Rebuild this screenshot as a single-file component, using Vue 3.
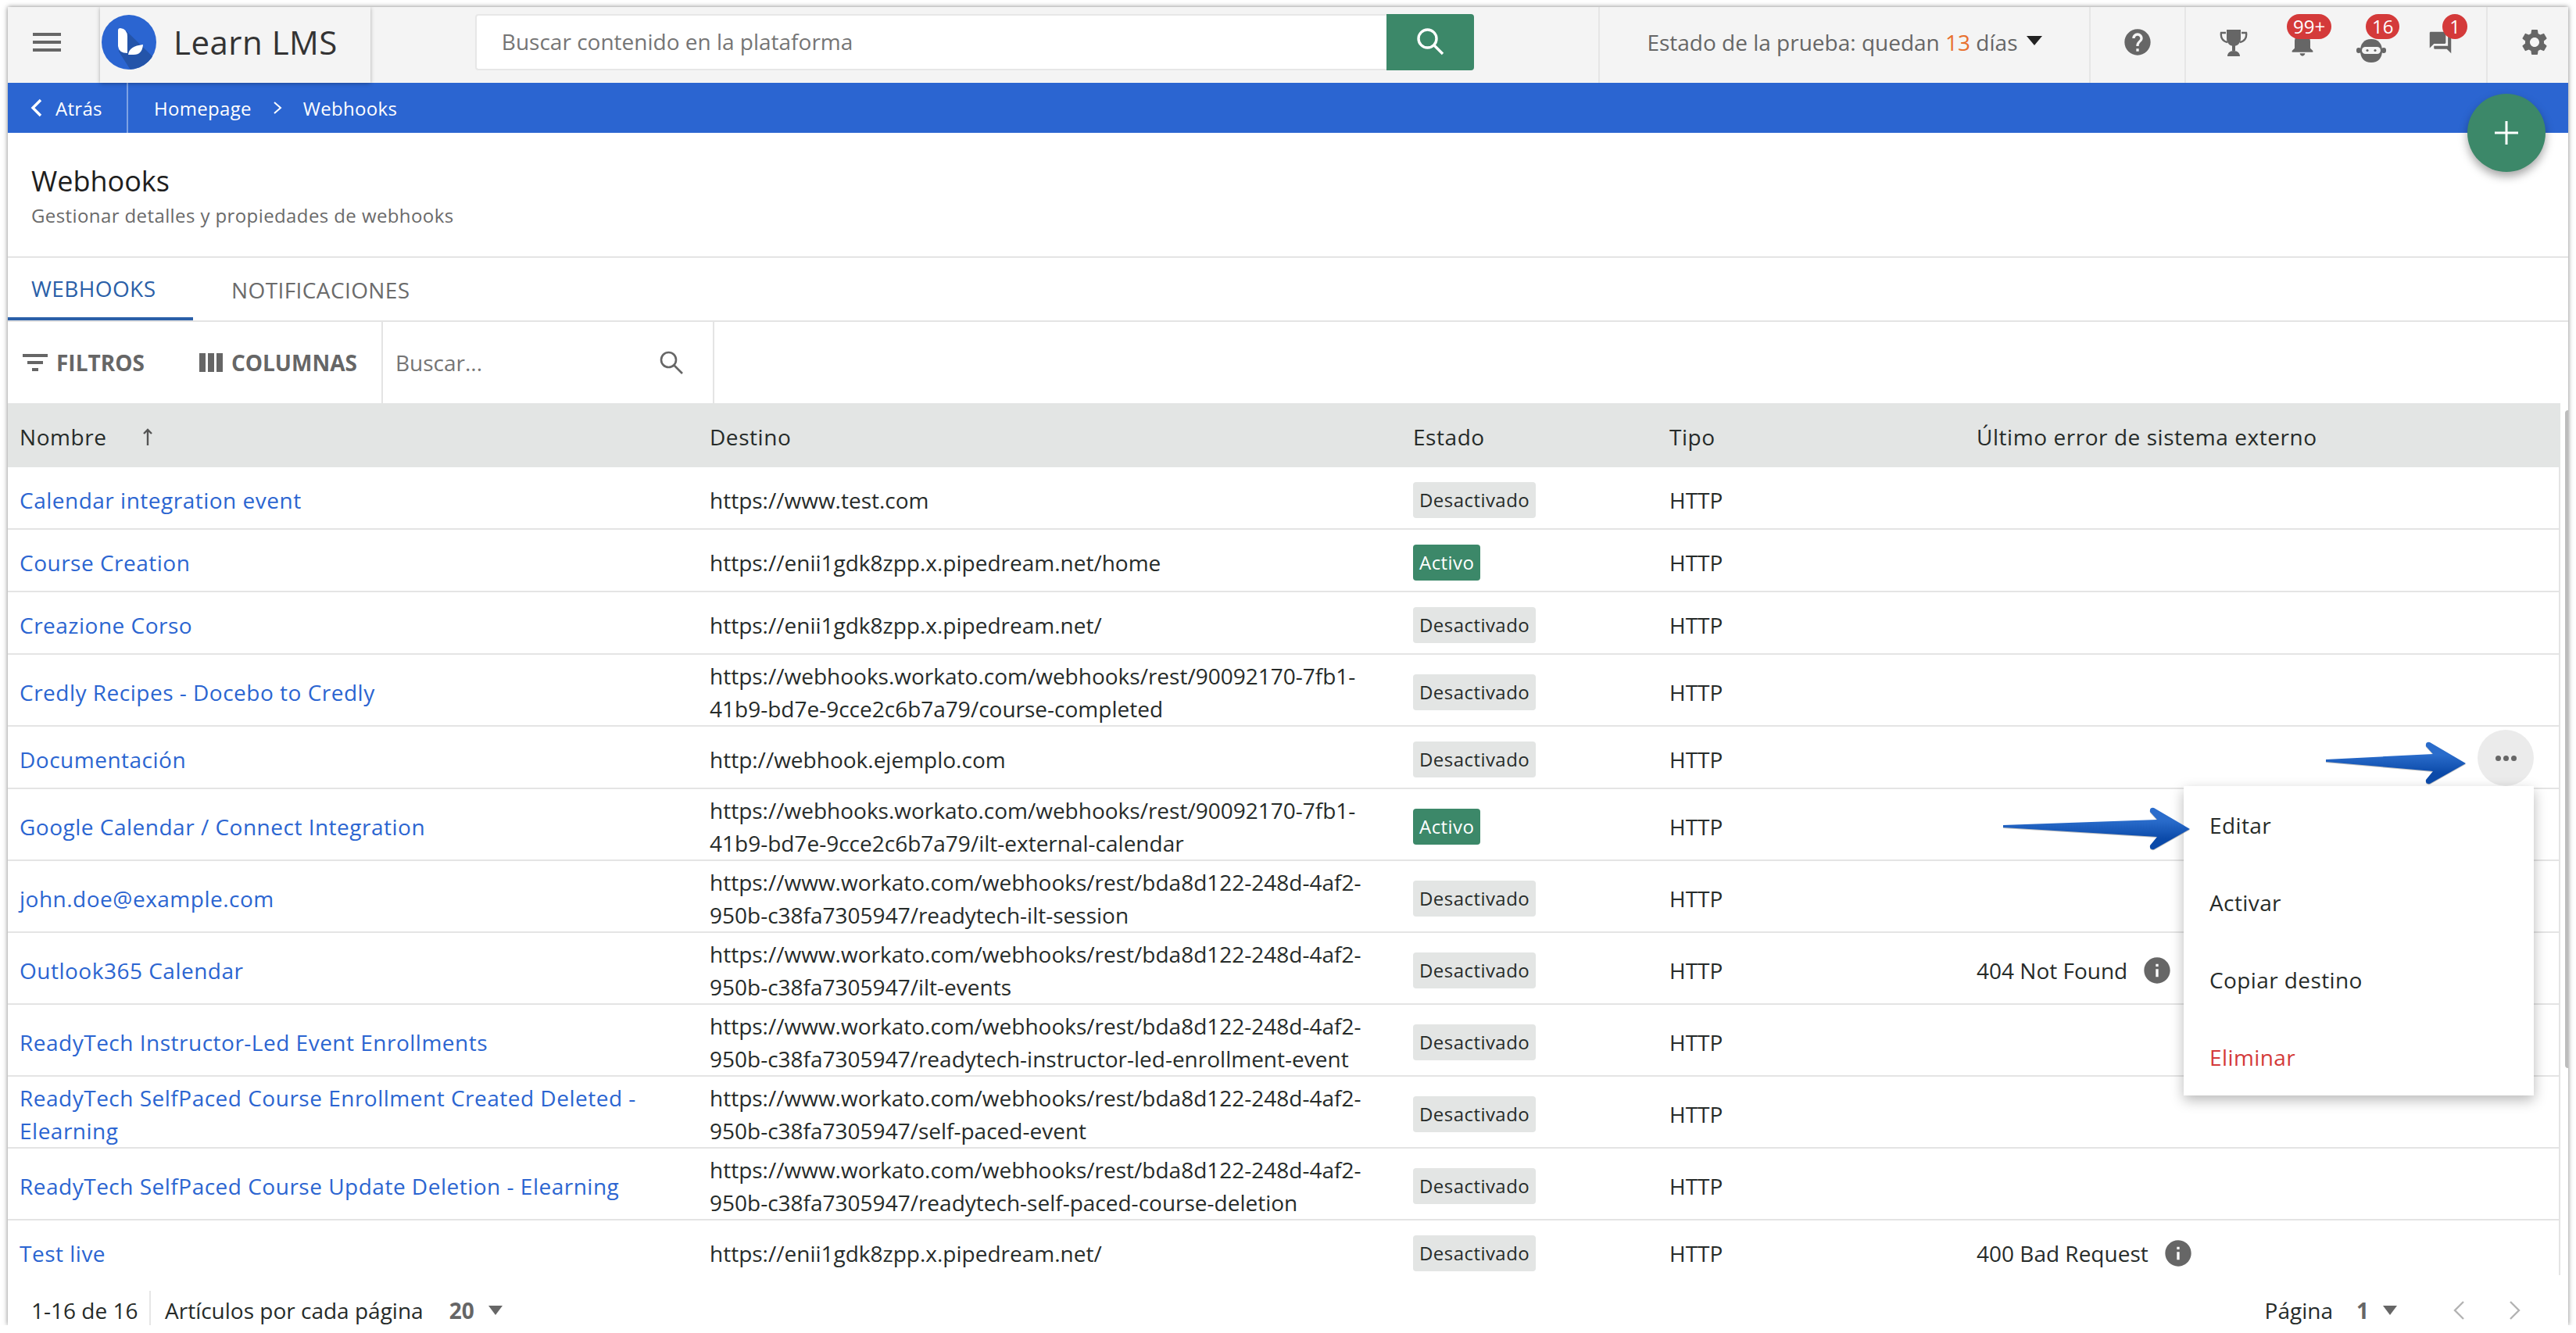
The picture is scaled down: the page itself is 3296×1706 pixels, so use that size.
<script setup>
// Webhooks list page of the LMS admin, with the row menu opened.
const WORKATO = "https://www.workato.com/webhooks/rest/bda8d122-248d-4af2-950b-c38fa7305947/"
const WEBHOOKS_URL = "https://webhooks.workato.com/webhooks/rest/90092170-7fb1-41b9-bd7e-9cce2c6b7a79/"

const rows = [
  { name: "Calendar integration event", url: "https://www.test.com", active: false },
  { name: "Course Creation", url: "https://enii1gdk8zpp.x.pipedream.net/home", active: true },
  { name: "Creazione Corso", url: "https://enii1gdk8zpp.x.pipedream.net/", active: false },
  { name: "Credly Recipes - Docebo to Credly", url: WEBHOOKS_URL + "course-completed", active: false },
  { name: "Documentación", url: "http://webhook.ejemplo.com", active: false },
  { name: "Google Calendar / Connect Integration", url: WEBHOOKS_URL + "ilt-external-calendar", active: true },
  { name: "john.doe@example.com", url: WORKATO + "readytech-ilt-session", active: false },
  { name: "Outlook365 Calendar", url: WORKATO + "ilt-events", active: false, error: "404 Not Found" },
  { name: "ReadyTech Instructor-Led Event Enrollments", url: WORKATO + "readytech-instructor-led-enrollment-event", active: false },
  { name: "ReadyTech SelfPaced Course Enrollment Created Deleted - Elearning", url: WORKATO + "self-paced-event", active: false },
  { name: "ReadyTech SelfPaced Course Update Deletion - Elearning", url: WORKATO + "readytech-self-paced-course-deletion", active: false },
  { name: "Test live", url: "https://enii1gdk8zpp.x.pipedream.net/", active: false, error: "400 Bad Request" },
]

const menu = ["Editar", "Activar", "Copiar destino"]

// Annotation arrows drawn over the table, head fixed at the right end.
const arrows = [
  { cls: "arrow-kebab", w: 180 },
  { cls: "arrow-edit", w: 240 },
]
function arrowPath(w) {
  const n = w - 42
  return `M1 24 L${n} 17 L${n - 9} 7 Q${n - 10} 1 ${n - 4} 2 L${w} 29 L${n - 4} 55 Q${n - 10} 56 ${n - 9} 50 L${n} 39 L1 27 Z`
}
</script>

<template>
  <div class="frame">
    <header class="topbar">
      <button class="burger">
        <svg width="36" height="24" viewBox="0 0 36 24" fill="#666"><path d="M0 0h36v4H0zM0 10h36v4H0zM0 20h36v4H0z" /></svg>
      </button>
      <div class="brand">
        <svg class="logo" width="70" height="70" viewBox="0 0 70 70">
          <defs><clipPath id="logo-clip"><circle cx="35" cy="35" r="35" /></clipPath></defs>
          <circle cx="35" cy="35" r="35" fill="#2b65d1" />
          <path clip-path="url(#logo-clip)" d="M31 20 L68 56 L48 72 L38 72 L22 47 Z" fill="#2454a9" />
          <path d="M21 20 Q21 17 24 17 Q33 18 33 28 V49 Q22 49 21 40 Z" fill="#fff" />
          <path d="M34 51 Q35 40 53 38 Q52 51 41 51 Z" fill="#fff" />
        </svg>
        <span class="brand-name">Learn LMS</span>
      </div>
      <div class="global-search">
        <div class="global-input">Buscar contenido en la plataforma</div>
        <button class="global-btn">
          <svg width="36" height="36" viewBox="0 0 36 36" fill="none" stroke="#fff" stroke-width="3.4"><circle cx="14.5" cy="14.5" r="11.5" /><path d="M23 23 L34 34" /></svg>
        </button>
      </div>
      <div class="trial">
        <span>Estado de la prueba: quedan <b class="days">13</b> días</span>
        <i class="trial-caret"></i>
      </div>
      <div class="tool help">
        <svg width="40" height="40" viewBox="0 0 24 24" fill="#666"><path d="M12 2C6.48 2 2 6.48 2 12s4.48 10 10 10 10-4.48 10-10S17.52 2 12 2zm1 17h-2v-2h2v2zm2.07-7.75l-.9.92C13.45 12.9 13 13.5 13 15h-2v-.5c0-1.1.45-2.1 1.17-2.83l1.24-1.26c.37-.36.59-.86.59-1.41 0-1.1-.9-2-2-2s-2 .9-2 2H8c0-2.21 1.79-4 4-4s4 1.79 4 4c0 .88-.36 1.68-.93 2.25z" /></svg>
      </div>
      <div class="tool-group">
        <div class="slot">
          <svg width="36" height="34" viewBox="0 0 36 34" fill="#666">
            <path d="M9 0h18v11c0 6-4 10-9 10s-9-4-9-10z" />
            <path d="M8 4H2c-1 6 2 11 8 12M28 4h6c1 6-2 11-8 12" fill="none" stroke="#666" stroke-width="2.4" />
            <path d="M16 20h4v7h-4zM10 34c0-4 3-7 8-7s8 3 8 7z" />
          </svg>
        </div>
        <div class="slot">
          <svg width="40" height="40" viewBox="0 0 24 24" fill="#666"><path d="M12 22c1.1 0 2-.9 2-2h-4c0 1.1.89 2 2 2zm6-6v-5c0-3.07-1.64-5.64-4.5-6.32V4c0-.83-.67-1.5-1.5-1.5s-1.5.67-1.5 1.5v.68C7.63 5.36 6 7.92 6 11v5l-2 2v1h16v-1l-2-2z" /></svg>
          <span class="count count-bell">99+</span>
        </div>
        <div class="slot">
          <svg class="bot" width="38" height="30" viewBox="0 0 38 30" fill="#666">
            <path d="M19 0c9 0 14 6 14 15s-5 15-14 15S5 24 5 15 10 0 19 0z" />
            <rect x="0" y="11" width="6" height="7" rx="3" /><rect x="32" y="11" width="6" height="7" rx="3" />
            <rect x="7" y="10" width="24" height="9" rx="4.5" fill="#f4f4f4" />
            <circle cx="14" cy="14.5" r="1.6" /><circle cx="24" cy="14.5" r="1.6" />
          </svg>
          <span class="count count-bot">16</span>
        </div>
        <div class="slot">
          <svg width="33" height="33" viewBox="0 0 24 24" fill="#666"><path d="M21 6h-2v9H6v2c0 .55.45 1 1 1h11l4 4V7c0-.55-.45-1-1-1zm-4 6V3c0-.55-.45-1-1-1H3c-.55 0-1 .45-1 1v14l4-4h10c.55 0 1-.45 1-1z" /></svg>
          <span class="count count-chat">1</span>
        </div>
      </div>
      <div class="tool gear">
        <svg width="40" height="40" viewBox="0 0 24 24" fill="#666"><path d="M19.14 12.94c.04-.3.06-.61.06-.94 0-.32-.02-.64-.07-.94l2.03-1.58a.49.49 0 0 0 .12-.61l-1.92-3.32a.488.488 0 0 0-.59-.22l-2.39.96c-.5-.38-1.03-.7-1.62-.94l-.36-2.54a.484.484 0 0 0-.48-.41h-3.84c-.24 0-.43.17-.47.41l-.36 2.54c-.59.24-1.13.57-1.62.94l-2.39-.96c-.22-.08-.47 0-.59.22L2.74 8.87c-.12.21-.08.47.12.61l2.03 1.58c-.05.3-.09.63-.09.94s.02.64.07.94l-2.03 1.58a.49.49 0 0 0-.12.61l1.92 3.32c.12.22.37.29.59.22l2.39-.96c.5.38 1.03.7 1.62.94l.36 2.54c.05.24.24.41.48.41h3.84c.24 0 .44-.17.47-.41l.36-2.54c.59-.24 1.13-.56 1.62-.94l2.39.96c.22.08.47 0 .59-.22l1.92-3.32c.12-.22.07-.47-.12-.61l-2.01-1.58zM12 15.6c-1.98 0-3.6-1.62-3.6-3.6s1.62-3.6 3.6-3.6 3.6 1.62 3.6 3.6-1.62 3.6-3.6 3.6z" /></svg>
      </div>
    </header>

    <nav class="crumbs">
      <div class="back">
        <svg width="16" height="24" viewBox="0 0 16 24" fill="none" stroke="#fff" stroke-width="3.4"><path d="M13 2 L3 12 L13 22" /></svg>
        <span>Atrás</span>
      </div>
      <div class="trail">
        <span>Homepage</span>
        <svg width="12" height="18" viewBox="0 0 12 18" fill="none" stroke="#fff" stroke-width="2"><path d="M2 2 L10 9 L2 16" /></svg>
        <span>Webhooks</span>
      </div>
    </nav>

    <button class="fab">
      <svg width="30" height="30" viewBox="0 0 30 30"><path d="M13.5 0h3v13.5H30v3H16.5V30h-3V16.5H0v-3h13.5z" fill="#fff" /></svg>
    </button>

    <section class="heading">
      <h1>Webhooks</h1>
      <p>Gestionar detalles y propiedades de webhooks</p>
    </section>

    <div class="tabs">
      <div class="tab tab-on">WEBHOOKS</div>
      <div class="tab">NOTIFICACIONES</div>
    </div>

    <div class="toolbar">
      <div class="tool-btns">
        <span class="tbtn">
          <svg width="32" height="22" viewBox="0 0 32 22" fill="#666"><path d="M0 0h32v4H0zM6 9h20v4H6zM12 18h8v4h-8z" /></svg>
          FILTROS
        </span>
        <span class="tbtn">
          <svg width="30" height="24" viewBox="0 0 30 24" fill="#666"><path d="M0 0h8v24H0zM11 0h8v24h-8zM22 0h8v24h-8z" /></svg>
          COLUMNAS
        </span>
      </div>
      <div class="table-search">
        <span>Buscar...</span>
        <svg width="32" height="32" viewBox="0 0 32 32" fill="none" stroke="#666" stroke-width="2.6"><circle cx="12.5" cy="12.5" r="9.5" /><path d="M19.5 19.5 L30 30" /></svg>
      </div>
    </div>

    <div class="table-wrap">
      <div class="row head">
        <div class="cell name-head">
          Nombre
          <svg width="14" height="22" viewBox="0 0 14 22" fill="none" stroke="#555" stroke-width="2.4"><path d="M7 22V2M2 7l5-5 5 5" /></svg>
        </div>
        <div class="cell">Destino</div>
        <div class="cell">Estado</div>
        <div class="cell">Tipo</div>
        <div class="cell">Último error de sistema externo</div>
      </div>
      <div class="body">
        <div v-for="r in rows" :key="r.name" class="row">
          <div class="cell link">{{ r.name }}</div>
          <div class="cell url">{{ r.url }}</div>
          <div class="cell">
            <span class="status" :class="{ on: r.active }">{{ r.active ? "Activo" : "Desactivado" }}</span>
          </div>
          <div class="cell">HTTP</div>
          <div class="cell err">
            <template v-if="r.error">
              {{ r.error }}
              <svg width="40" height="40" viewBox="0 0 24 24"><path fill="#666" d="M12 2C6.48 2 2 6.48 2 12s4.48 10 10 10 10-4.48 10-10S17.52 2 12 2zm1 15h-2v-6h2v6zm0-8h-2V7h2v2z" /></svg>
            </template>
          </div>
        </div>
      </div>
      <div class="scroll-thumb"></div>

      <button class="kebab"><i></i><i></i><i></i></button>
      <div class="row-menu">
        <div v-for="m in menu" :key="m" class="menu-item">{{ m }}</div>
        <div class="menu-item danger">Eliminar</div>
      </div>

      <svg v-for="a in arrows" :key="a.cls" class="arrow" :class="a.cls" :width="a.w" height="58" :viewBox="`0 0 ${a.w} 58`">
        <defs>
          <linearGradient :id="a.cls + '-fill'" x1="0" y1="0" x2="0" y2="1">
            <stop offset="0.3" stop-color="#2a6ccb" />
            <stop offset="0.75" stop-color="#0b4aa9" />
          </linearGradient>
        </defs>
        <path :d="arrowPath(a.w)" :fill="`url(#${a.cls}-fill)`" />
      </svg>
    </div>

    <footer class="pager">
      <div class="pager-left">
        <span class="range">1-16 de 16</span>
        <span class="per-page">Artículos por cada página</span>
        <b>20</b>
        <i class="pager-caret"></i>
      </div>
      <div class="pager-right">
        <span>Página</span>
        <b>1</b>
        <i class="pager-caret"></i>
        <svg class="prev" width="16" height="26" viewBox="0 0 16 26" fill="none" stroke="#b3b3b3" stroke-width="2.4"><path d="M14 2 L3 13 L14 24" /></svg>
        <svg class="next" width="16" height="26" viewBox="0 0 16 26" fill="none" stroke="#b3b3b3" stroke-width="2.4"><path d="M2 2 L13 13 L2 24" /></svg>
      </div>
    </footer>
  </div>
</template>

<style scoped>
.frame {
  position: relative;
  box-sizing: border-box;
  width: 3276px;
  height: 1687px;
  margin: 9px 0 0 10px;
  background: #fff;
  box-shadow: 0 0 6px rgba(0, 0, 0, 0.5);
  font-family: "Open Sans", sans-serif;
  font-size: 28px;
  color: #262b29;
  overflow: hidden;
}
button {
  border: 0;
  padding: 0;
  background: none;
  font: inherit;
}
svg { display: block; flex: none; }

/* top bar */
.topbar {
  display: flex;
  height: 97px;
  background: #f4f4f4;
}
.burger {
  width: 118px;
  display: flex;
  align-items: center;
  padding: 0 0 7px 32px;
}
.brand {
  position: relative;
  z-index: 2;
  width: 346px;
  box-sizing: border-box;
  padding: 0 0 8px 2px;
  display: flex;
  align-items: center;
  gap: 22px;
  box-shadow: 0 1px 5px rgba(0, 0, 0, 0.3);
  background: #f4f4f4;
}
.brand-name {
  font-size: 42px;
  font-weight: 500;
  color: #333;
  letter-spacing: 0.5px;
}
.global-search {
  display: flex;
  width: 1279px;
  height: 72px;
  margin: 9px 0 0 134px;
}
.global-input {
  flex: 1;
  box-sizing: border-box;
  padding: 0 0 2px 32px;
  display: flex;
  align-items: center;
  background: #fff;
  border: 2px solid #e7e7e7;
  border-right: 0;
  border-radius: 4px 0 0 4px;
  color: #757575;
}
.global-btn {
  width: 112px;
  display: flex;
  align-items: center;
  justify-content: center;
  padding-bottom: 2px;
  background: #3c8869;
  border-radius: 0 4px 4px 0;
}
.trial {
  width: 628px;
  box-sizing: border-box;
  margin-left: 159px;
  padding: 0 0 8px 60px;
  display: flex;
  align-items: center;
  gap: 12px;
  border-left: 2px solid #e6e6e6;
  color: #666;
  white-space: nowrap;
}
.days { font-weight: 400; color: #e8702e; }
.trial-caret {
  width: 0;
  height: 0;
  border-left: 10px solid transparent;
  border-right: 10px solid transparent;
  border-top: 12px solid #222;
  margin-top: -4px;
}
.tool {
  display: flex;
  align-items: center;
  justify-content: center;
  padding-bottom: 8px;
  border-left: 2px solid #e6e6e6;
  box-sizing: border-box;
}
.help { width: 122px; }
.gear { width: 105px; padding-left: 16px; }
.tool-group {
  display: flex;
  width: 386px;
  box-sizing: border-box;
  padding-left: 17px;
  border-left: 2px solid #e6e6e6;
}
.slot {
  position: relative;
  width: 88px;
  display: flex;
  align-items: center;
  justify-content: center;
  padding-bottom: 6px;
  box-sizing: border-box;
}
.bot { margin-top: 20px; }
.count {
  position: absolute;
  top: 9px;
  height: 32px;
  box-sizing: border-box;
  border-radius: 16px;
  background: #d43a3a;
  color: #fff;
  font-size: 24px;
  line-height: 32px;
  text-align: center;
}
.count-bell { left: 24px; width: 57px; }
.count-bot { left: 37px; width: 43px; }
.count-chat { left: 47px; width: 32px; }

/* breadcrumb bar */
.crumbs {
  display: flex;
  height: 64px;
  background: #2b65d1;
  color: #fff;
  font-size: 24px;
  font-weight: 500;
  letter-spacing: 0.3px;
}
.back {
  width: 154px;
  box-sizing: border-box;
  display: flex;
  align-items: center;
  gap: 16px;
  padding-left: 29px;
  border-right: 2px solid #7ea2e3;
}
.trail {
  display: flex;
  align-items: center;
  gap: 27px;
  padding-left: 33px;
}
.fab {
  position: absolute;
  top: 111px;
  left: 3147px;
  z-index: 3;
  width: 100px;
  height: 100px;
  border-radius: 50%;
  background: #3c8869;
  box-shadow: 0 6px 12px rgba(0, 0, 0, 0.35);
  display: flex;
  align-items: center;
  justify-content: center;
}

/* page heading */
.heading {
  box-sizing: border-box;
  height: 160px;
  padding: 38px 30px 0;
  border-bottom: 2px solid #e4e4e4;
}
.heading h1 {
  margin: 0;
  font-size: 36px;
  line-height: 48px;
  font-weight: 500;
  color: #1e1e1e;
}
.heading p {
  margin: 2px 0 0;
  font-size: 24px;
  line-height: 36px;
  font-weight: 500;
  letter-spacing: 0.4px;
  color: #6a6a6a;
}
.tabs {
  display: flex;
  height: 82px;
  border-bottom: 2px solid #e4e4e4;
  box-sizing: border-box;
  font-size: 28px;
  font-weight: 500;
  letter-spacing: 0.4px;
}
.tab {
  padding: 2px 46px 0 49px;
  display: flex;
  align-items: center;
  color: #6b6b6b;
  box-sizing: border-box;
}
.tab-on {
  width: 237px;
  padding-left: 30px;
  padding-right: 0;
  color: #2a5fa8;
  border-bottom: 4px solid #2a5fa8;
}

/* toolbar */
.toolbar {
  display: flex;
  height: 104px;
  box-sizing: border-box;
  font-weight: 700;
  color: #666;
}
.tool-btns {
  width: 480px;
  box-sizing: border-box;
  padding-left: 19px;
  display: flex;
  align-items: center;
  gap: 70px;
  border-right: 2px solid #e4e4e4;
  font-size: 28px;
}
.tbtn { display: flex; align-items: center; gap: 11px; }
.table-search {
  width: 424px;
  box-sizing: border-box;
  padding: 0 37px 0 16px;
  display: flex;
  align-items: center;
  justify-content: space-between;
  border-right: 2px solid #e4e4e4;
  font-weight: 400;
  color: #757575;
}

/* table */
.table-wrap {
  position: relative;
  height: 1116px;
}
.body {
  height: 1034px;
  overflow: hidden;
}
.row {
  display: grid;
  grid-template-columns: 882px 900px 328px 393px 1fr;
  min-height: 80px;
  box-sizing: border-box;
  padding: 6px 0 0;
  border-bottom: 2px solid #e4e4e4;
  border-right: 2px solid #e4e4e4;
  width: 3266px;
}
.head {
  min-height: 82px;
  padding-top: 4px;
  background: #e3e5e4;
  border: 0;
  font-weight: 500;
  letter-spacing: 0.55px;
}
.cell {
  display: flex;
  align-items: center;
  padding: 0 16px;
  line-height: 42px;
  min-width: 0;
}
.cell:first-child { padding-left: 15px; }
.name-head { gap: 46px; }
.url { display: block; align-self: center; word-break: normal; }
.link { color: #2b65d1; font-weight: 500; letter-spacing: 0.5px; }
.status {
  display: inline-block;
  height: 46px;
  padding: 0 8px;
  border-radius: 4px;
  background: #e3e5e4;
  font-size: 24px;
  font-weight: 500;
  letter-spacing: 0.45px;
  line-height: 46px;
}
.status.on { background: #3c8869; color: #fff; }
.err { gap: 18px; }
.scroll-thumb {
  position: absolute;
  top: 9px;
  left: 3272px;
  width: 4px;
  height: 842px;
  border-radius: 4px 0 0 4px;
  background: #bdbdbd;
}
.kebab {
  position: absolute;
  top: 418px;
  left: 3160px;
  width: 72px;
  height: 72px;
  border-radius: 50%;
  background: #ebebeb;
  display: flex;
  align-items: center;
  justify-content: center;
  gap: 3px;
}
.kebab i {
  width: 7px;
  height: 7px;
  border-radius: 50%;
  background: #666;
}
.row-menu {
  position: absolute;
  top: 490px;
  left: 2784px;
  z-index: 4;
  width: 448px;
  background: #fff;
  box-shadow: 0 6px 16px rgba(0, 0, 0, 0.28);
}
.menu-item {
  height: 99px;
  box-sizing: border-box;
  padding: 1px 0 0 33px;
  display: flex;
  align-items: center;
  font-weight: 500;
  letter-spacing: 0.4px;
  font-size: 28px;
  color: #262b29;
}
.menu-item.danger { color: #d43a3a; }
.arrow {
  position: absolute;
  z-index: 5;
  filter: drop-shadow(0 1px 0 rgba(0, 0, 0, 0.25));
}
.arrow-kebab { left: 2965px; top: 432px; }
.arrow-edit { left: 2552px; top: 516px; }

/* footer */
.pager {
  display: flex;
  justify-content: space-between;
  height: 64px;
  box-sizing: border-box;
  padding-top: 26px;
}
.pager b { font-weight: 700; color: #666; }
.pager-left, .pager-right { display: flex; align-items: center; }
.range {
  width: 183px;
  box-sizing: border-box;
  margin-top: -6px;
  padding: 6px 0 0 30px;
  border-right: 2px solid #e6e6e6;
  line-height: 38px;
}
.per-page { margin: 0 33px 0 18px; }
.pager-caret {
  width: 0;
  height: 0;
  border-left: 9px solid transparent;
  border-right: 9px solid transparent;
  border-top: 12px solid #666;
  margin-left: 18px;
}
.pager-right { padding-right: 60px; }
.pager-right b { margin-left: 30px; }
.prev { margin-left: 71px; }
.next { margin-left: 56px; }
</style>

<style>
body { background: #fff; }
</style>
